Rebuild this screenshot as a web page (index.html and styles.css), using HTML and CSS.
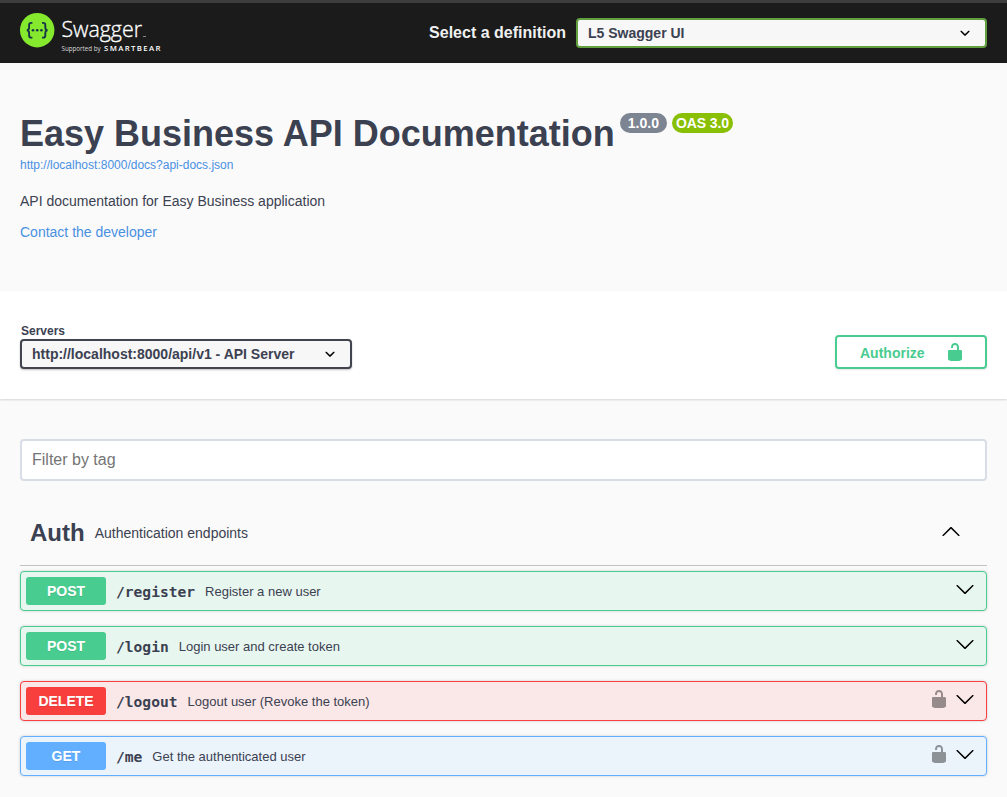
FILE: index.html
```html
<!DOCTYPE html>
<html lang="en">
<head>
<meta charset="utf-8">
<title>L5 Swagger UI</title>
<link rel="stylesheet" href="styles.css">
</head>
<body>
<svg class="defs" width="0" height="0" aria-hidden="true">
  <symbol id="unlocked" viewBox="0 0 20 20"><path d="M15.8 8H14V5.6C14 2.703 12.665 1 10 1 7.334 1 6 2.703 6 5.6V6h2v-.801C8 3.754 8.797 3 10 3c1.203 0 2 .754 2 2.199V8H4c-.553 0-1 .646-1 1.199V17c0 .549.428 1.139.951 1.307l1.197.387C5.672 18.861 6.55 19 7.1 19h5.8c.549 0 1.428-.139 1.951-.307l1.196-.387c.524-.167.953-.757.953-1.306V9.199C17 8.646 16.352 8 15.8 8z"/></symbol>
  <symbol id="arrow-down" viewBox="0 0 20 20"><path d="M17.418 6.109c.272-.268.709-.268.979 0s.271.701 0 .969l-7.908 7.83c-.27.268-.707.268-.979 0l-7.908-7.83c-.27-.268-.27-.701 0-.969.271-.268.709-.268.979 0L10 13.25l7.418-7.141z"/></symbol>
  <symbol id="arrow-up" viewBox="0 0 20 20"><path d="M17.418 14.908c.272.268.709.268.979 0s.271-.701 0-.969l-7.908-7.83c-.27-.268-.707-.268-.979 0l-7.908 7.83c-.27.268-.27.701 0 .969.271.268.709.268.979 0L10 7.767l7.418 7.141z"/></symbol>
  <symbol id="select-arrow" viewBox="0 0 20 20"><path d="M13.418 7.859c.271-.268.709-.268.978 0 .27.268.272.701 0 .969l-3.908 3.83c-.27.268-.707.268-.979 0l-3.908-3.83c-.27-.267-.27-.701 0-.969.271-.268.709-.268.978 0L10 11l3.418-3.141z"/></symbol>
</svg>

<header class="topbar">
  <svg class="logo" width="150" height="44" viewBox="0 0 150 44">
    <circle cx="17.2" cy="18.2" r="17.2" fill="#85ea2d"/>
    <g fill="none" stroke="#173647" stroke-width="1.9">
      <path d="M12.4 10.9h-1.2c-1.5 0-2.1.8-2.1 2.2v2.4c0 1.7-.6 2.5-2.2 2.7 1.6.2 2.2 1 2.2 2.7v2.5c0 1.4.6 2.2 2.1 2.2h1.2"/>
      <path d="M22 10.9h1.2c1.5 0 2.1.8 2.1 2.2v2.4c0 1.7.6 2.5 2.2 2.7-1.6.2-2.2 1-2.2 2.7v2.5c0 1.4-.6 2.2-2.1 2.2H22"/>
    </g>
    <g fill="#173647"><circle cx="13" cy="18.3" r="1.3"/><circle cx="17.2" cy="18.3" r="1.3"/><circle cx="21.4" cy="18.3" r="1.3"/></g>
    <text class="logo-name" x="41.4" y="25" textLength="80.6" lengthAdjust="spacingAndGlyphs">Swagger</text>
    <path d="M123 24.5h3" stroke="#888" stroke-width="1"/>
    <text class="logo-by" x="41.6" y="39" textLength="39" lengthAdjust="spacingAndGlyphs">Supported by</text>
    <text class="logo-brand" x="84" y="39" textLength="56.5">SMARTBEAR</text>
  </svg>
  <div class="definition">
    <span class="definition-label">Select a definition</span>
    <div class="select select-definition"><span>L5 Swagger UI</span><svg class="icon"><use href="#select-arrow"/></svg></div>
  </div>
</header>

<section class="info">
  <div class="title-row">
    <h1 class="title">Easy Business API Documentation</h1>
    <span class="version">1.0.0</span>
    <span class="version version-oas">OAS 3.0</span>
  </div>
  <a class="spec-link">http://localhost:8000/docs?api-docs.json</a>
  <p class="description">API documentation for Easy Business application</p>
  <a class="contact">Contact the developer</a>
</section>

<section class="schemes">
  <div class="servers">
    <span class="servers-label">Servers</span>
    <div class="select select-server"><span>http://localhost:8000/api/v1 - API Server</span><svg class="icon"><use href="#select-arrow"/></svg></div>
  </div>
  <button class="authorize"><span class="authorize-label">Authorize</span><svg class="icon"><use href="#unlocked"/></svg></button>
</section>

<main class="operations">
  <input class="filter" type="text" placeholder="Filter by tag">
  <div class="tag">
    <h2 class="tag-name">Auth</h2>
    <span class="tag-description">Authentication endpoints</span>
    <svg class="icon tag-arrow"><use href="#arrow-up"/></svg>
  </div>
  <div class="operation post">
    <span class="method">POST</span><span class="path">/register</span><span class="summary">Register a new user</span>
    <svg class="icon"><use href="#arrow-down"/></svg>
  </div>
  <div class="operation post">
    <span class="method">POST</span><span class="path">/login</span><span class="summary">Login user and create token</span>
    <svg class="icon"><use href="#arrow-down"/></svg>
  </div>
  <div class="operation delete">
    <span class="method">DELETE</span><span class="path">/logout</span><span class="summary">Logout user (Revoke the token)</span>
    <svg class="icon lock"><use href="#unlocked"/></svg><svg class="icon"><use href="#arrow-down"/></svg>
  </div>
  <div class="operation get">
    <span class="method">GET</span><span class="path">/me</span><span class="summary">Get the authenticated user</span>
    <svg class="icon lock"><use href="#unlocked"/></svg><svg class="icon"><use href="#arrow-down"/></svg>
  </div>
</main>
</body>
</html>
```
FILE: styles.css
```css
* { box-sizing: border-box; }
body {
  margin: 0;
  height: 797px;
  overflow: hidden;
  background: #fafafa;
  color: #3b4151;
  font-family: "Liberation Sans", Arial, sans-serif;
}
.defs { position: absolute; }
.icon { display: block; flex: none; width: 20px; height: 20px; }

.topbar {
  display: flex;
  justify-content: space-between;
  height: 63px;
  padding: 9px 20px 0;
  border-top: 3px solid #3d3d3d;
  background: #1b1b1b;
}
.logo { display: block; }
.logo-name { font: 300 22.5px "Open Sans", "Noto Sans", sans-serif; fill: #fff; stroke: #fff; stroke-width: .35px; }
.logo-by { font: 400 6.4px "Open Sans", "Noto Sans", sans-serif; fill: #ddd; }
.logo-brand { font: 600 7.8px "Open Sans", "Noto Sans", sans-serif; fill: #fff; }
.definition { display: flex; gap: 10px; margin-top: 6px; }
.definition-label { color: #f0f0f0; font-size: 16px; font-weight: 700; line-height: 29px; }

.select {
  display: flex;
  align-items: center;
  justify-content: space-between;
  height: 30px;
  padding: 0 10px;
  border: 2px solid #41444e;
  border-radius: 4px;
  background: #f7f7f7;
  font-size: 14px;
  font-weight: 700;
  white-space: nowrap;
}
.select-definition { width: 411px; border-color: #62a03f; }
.select-server { width: 332px; box-shadow: 0 1px 2px rgba(0, 0, 0, .25); }

.info { height: 228px; padding: 50px 20px 0; }
.title-row { display: flex; gap: 5px; height: 43px; }
.title { margin: 0; font-size: 36px; line-height: 41px; white-space: nowrap; }
.version {
  height: 20px;
  padding: 0 8px;
  border-radius: 20px;
  background: #7d8492;
  color: #fff;
  font-size: 14px;
  font-weight: 700;
  line-height: 20px;
  white-space: nowrap;
}
.version-oas { padding: 0 4px; background: #89bf04; letter-spacing: -.1px; }
.spec-link, .contact { display: block; color: #4990e2; }
.spec-link { font-size: 12px; line-height: 18px; }
.description { margin: 18px 0 0; font-size: 14px; line-height: 18px; }
.contact { margin-top: 13px; font-size: 14px; line-height: 18px; }

.schemes {
  display: flex;
  align-items: flex-start;
  justify-content: space-between;
  height: 108px;
  padding: 33px 20px 0;
  background: #fff;
  box-shadow: 0 1px 2px rgba(0, 0, 0, .15);
}
.servers-label { display: block; padding-left: 1px; font-size: 12px; font-weight: 700; line-height: 15px; }
.authorize {
  display: flex;
  align-items: center;
  justify-content: space-between;
  width: 152px;
  height: 34px;
  margin-top: 11px;
  padding: 0 20px 0 23px;
  border: 2px solid #49cc90;
  border-radius: 4px;
  background: transparent;
  box-shadow: 0 1px 2px rgba(0, 0, 0, .1);
  color: #49cc90;
  fill: #49cc90;
  font: 700 14px "Liberation Sans", Arial, sans-serif;
}
.authorize-label { padding-top: 2px; }

.operations { padding: 40px 20px 0; }
.filter {
  display: block;
  width: 100%;
  height: 42px;
  padding: 0 10px;
  border: 2px solid #d8dde7;
  border-radius: 4px;
  background: #fff;
  font: 16px "Liberation Sans", Arial, sans-serif;
}
.filter::placeholder { color: #757575; }
.tag {
  display: flex;
  align-items: center;
  height: 66px;
  margin: 19px 0 5px;
  padding: 0 26px 0 10px;
  border-bottom: 1px solid rgba(59, 65, 81, .3);
}
.tag-name { margin: 0; font-size: 24px; }
.tag-description { flex: 1; padding-left: 10px; font-size: 14px; }
.tag-arrow { margin-bottom: 3px; }

.operation {
  display: flex;
  align-items: center;
  height: 40px;
  margin-bottom: 15px;
  padding: 0 11px 0 5px;
  border: 1px solid;
  border-radius: 4px;
  box-shadow: 0 0 3px rgba(0, 0, 0, .19);
}
.operation .icon { margin: 0 0 4px 6px; fill: #000; }
.operation .lock { fill: rgba(0, 0, 0, .4); }
.method {
  width: 80px;
  height: 28px;
  border-radius: 3px;
  color: #fff;
  font-size: 14px;
  font-weight: 700;
  line-height: 28px;
  text-align: center;
  text-shadow: 0 1px 0 rgba(0, 0, 0, .1);
}
.path { padding: 0 10px; font: 700 14.6px "DejaVu Sans Mono", monospace; }
.summary { flex: 1; font-size: 13px; }
.post { border-color: #49cc90; background: #e8f6f0; }
.post .method { background: #49cc90; }
.delete { border-color: #f93e3e; background: #fae7e7; }
.delete .method { background: #f93e3e; }
.get { border-color: #61affe; background: #ebf3fb; }
.get .method { background: #61affe; }
```
